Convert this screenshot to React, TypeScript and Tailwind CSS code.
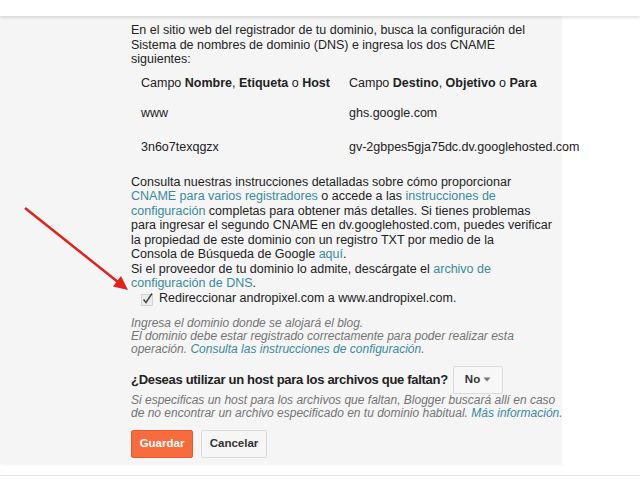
export default function App() {
  const link = "text-[#3a8a9b]";

  return (
    <div className="relative w-[640px] h-[480px] overflow-hidden bg-white text-[#222] font-['Liberation_Sans',Arial,sans-serif]">
      {/* top bar */}
      <div className="relative z-10 h-[16px] bg-white shadow-[0_2px_3px_rgba(0,0,0,0.12)]" />

      <div className="flex">
        <div className="w-[561px] h-[448px] bg-[#f5f5f5] shadow-[1px_1px_2px_rgba(0,0,0,0.05)] pl-[131px] pt-[7px]">
          <p className="text-[12.5px] leading-[14.5px] whitespace-nowrap">
            En el sitio web del registrador de tu dominio, busca la configuración del
            <br />
            Sistema de nombres de dominio (DNS) e ingresa los dos CNAME
            <br />
            siguientes:
          </p>

          <div className="mt-[2px] grid grid-cols-[208px_auto] text-[12.5px] whitespace-nowrap">
            <div className="h-[29px] flex items-center pl-[10px]">
              Campo&nbsp;<b>Nombre</b>,&nbsp;<b>Etiqueta</b>&nbsp;o&nbsp;<b>Host</b>
            </div>
            <div className="h-[29px] flex items-center pl-[10px]">
              Campo&nbsp;<b>Destino</b>,&nbsp;<b>Objetivo</b>&nbsp;o&nbsp;<b>Para</b>
            </div>
            <div className="h-[31px] flex items-center pl-[10px]">www</div>
            <div className="h-[31px] flex items-center pl-[10px]">ghs.google.com</div>
            <div className="h-[37px] flex items-center pl-[10px]">3n6o7texqgzx</div>
            <div className="h-[37px] flex items-center pl-[10px]">gv-2gbpes5gja75dc.dv.googlehosted.com</div>
          </div>

          <p className="mt-[9px] text-[12.5px] leading-[14.5px] whitespace-nowrap">
            Consulta nuestras instrucciones detalladas sobre cómo proporcionar
            <br />
            <span className={link}>CNAME para varios registradores</span> o accede a las{" "}
            <span className={link}>
              instrucciones de
              <br />
              configuración
            </span>{" "}
            completas para obtener más detalles. Si tienes problemas
            <br />
            para ingresar el segundo CNAME en dv.googlehosted.com, puedes verificar
            <br />
            la propiedad de este dominio con un registro TXT por medio de la
            <br />
            Consola de Búsqueda de Google <span className={link}>aquí</span>.
            <br />
            Si el proveedor de tu dominio lo admite, descárgate el{" "}
            <span className={link}>
              archivo de
              <br />
              configuración de DNS
            </span>
            .
          </p>

          <label className="flex items-center h-[16px] pl-[9px] text-[12.5px] whitespace-nowrap">
            <svg width="14" height="14" viewBox="0 0 14 14" className="mr-[5px]">
              <rect x="1.5" y="2.5" width="11" height="11" fill="#ececec" stroke="#d2d2d2" />
              <path d="M3.5 7.5 L6 10.5 L12 1.5" fill="none" stroke="#4a4a4a" strokeWidth="1.6" />
            </svg>
            Redireccionar andropixel.com a www.andropixel.com.
          </label>

          <p className="mt-[10px] text-[12px] leading-[13px] italic text-[#747474] whitespace-nowrap">
            Ingresa el dominio donde se alojará el blog.
            <br />
            El dominio debe estar registrado correctamente para poder realizar esta
            <br />
            operación. <span className={link}>Consulta las instrucciones de configuración</span>.
          </p>

          <div className="mt-[10px] flex items-center gap-[5px] h-[28px]">
            <span className="text-[13px] font-bold tracking-[-0.3px] text-[#222] whitespace-nowrap">
              ¿Deseas utilizar un host para los archivos que faltan?
            </span>
            <div className="w-[50px] h-[28px] flex items-center justify-between px-[11px] bg-[#f7f7f7] border border-[#dcdcdc] rounded-[2px]">
              <span className="text-[11.5px] font-bold text-[#333]">No</span>
              <svg width="8" height="5" viewBox="0 0 8 5">
                <path d="M0.5 0.5 L7.5 0.5 L4 4.5 Z" fill="#777" />
              </svg>
            </div>
          </div>

          <p className="text-[12px] leading-[13px] italic text-[#747474] whitespace-nowrap">
            Si especificas un host para los archivos que faltan, Blogger buscará allí en caso
            <br />
            de no encontrar un archivo especificado en tu dominio habitual.{" "}
            <span className={link}>Más información</span>.
          </p>

          <div className="mt-[10px] flex gap-[8px]">
            <button className="w-[62px] h-[28px] rounded-[2px] bg-[#f76b3c] border border-[#e35b2d] text-white text-[11.5px] font-bold">
              Guardar
            </button>
            <button className="w-[66px] h-[28px] rounded-[2px] bg-[#f6f6f6] border border-[#dcdcdc] text-[#333] text-[11.5px] font-bold">
              Cancelar
            </button>
          </div>
        </div>
      </div>

      <div className="mt-[11px] h-px bg-[#e4e4e4]" />

      {/* annotation arrow */}
      <svg className="absolute left-0 top-0" width="640" height="480">
        <line x1="25" y1="208" x2="118" y2="282" stroke="#e3211c" strokeWidth="2.5" />
        <polygon points="128,290 113,286.5 121,276" fill="#e3211c" />
      </svg>
    </div>
  );
}
